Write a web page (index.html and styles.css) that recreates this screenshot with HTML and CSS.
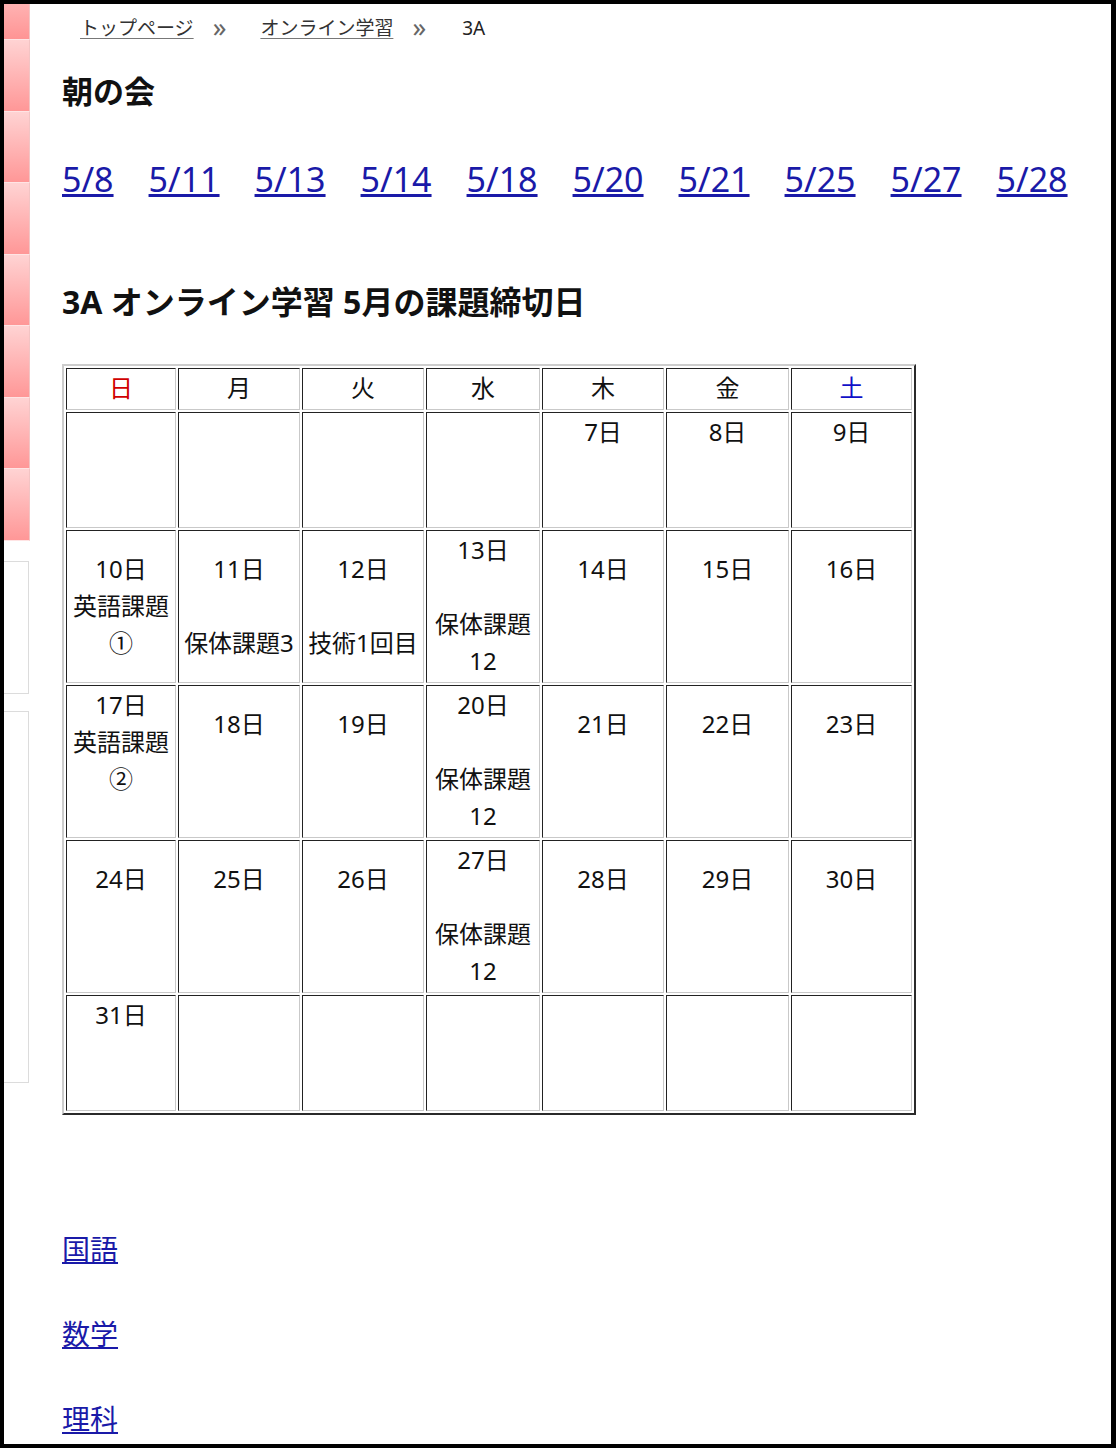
FILE: index.html
```html
<!DOCTYPE html>
<html lang="ja">
<head>
<meta charset="utf-8">
<title>3A オンライン学習</title>
<link rel="stylesheet" href="styles.css">
</head>
<body>
<div class="frame">
  <aside class="side">
    <div class="pink first"></div>
    <div class="pink"></div>
    <div class="pink"></div>
    <div class="pink"></div>
    <div class="pink"></div>
    <div class="pink"></div>
    <div class="pink"></div>
    <div class="pink"></div>
    <div class="gbox one"></div>
    <div class="gbox two"></div>
  </aside>
  <main class="main">
    <nav class="crumbs">
      <a href="#" class="crumb">トップページ</a>
      <span class="sep">»</span>
      <a href="#" class="crumb">オンライン学習</a>
      <span class="sep">»</span>
      <span class="here">3A</span>
    </nav>
    <h2 class="ttl t1">朝の会</h2>
    <div class="dates">
      <a href="#">5/8</a><a href="#">5/11</a><a href="#">5/13</a><a href="#">5/14</a><a href="#">5/18</a><a href="#">5/20</a><a href="#">5/21</a><a href="#">5/25</a><a href="#">5/27</a><a href="#">5/28</a>
    </div>
    <h2 class="ttl t2">3A オンライン学習 5月の課題締切日</h2>
    <table class="cal">
      <tr>
        <th class="w1 sun">日</th>
        <th class="w2">月</th>
        <th class="w3">火</th>
        <th class="w4">水</th>
        <th class="w5">木</th>
        <th class="w6">金</th>
        <th class="w7 sat">土</th>
      </tr>
      <tr>
        <td>&nbsp;</td>
        <td>&nbsp;</td>
        <td>&nbsp;</td>
        <td>&nbsp;</td>
        <td>7日<br><br>&nbsp;</td>
        <td>8日<br><br>&nbsp;</td>
        <td>9日<br><br>&nbsp;</td>
      </tr>
      <tr>
        <td>10日<br>英語課題<br>①</td>
        <td>11日<br><br>保体課題3</td>
        <td>12日<br><br>技術1回目</td>
        <td>13日<br><br>保体課題<br>12</td>
        <td>14日<br><br>&nbsp;</td>
        <td>15日<br><br>&nbsp;</td>
        <td>16日<br><br>&nbsp;</td>
      </tr>
      <tr>
        <td>17日<br>英語課題<br>②<br>&nbsp;</td>
        <td>18日<br><br>&nbsp;</td>
        <td>19日<br><br>&nbsp;</td>
        <td>20日<br><br>保体課題<br>12</td>
        <td>21日<br><br>&nbsp;</td>
        <td>22日<br><br>&nbsp;</td>
        <td>23日<br><br>&nbsp;</td>
      </tr>
      <tr>
        <td>24日<br><br>&nbsp;</td>
        <td>25日<br><br>&nbsp;</td>
        <td>26日<br><br>&nbsp;</td>
        <td>27日<br><br>保体課題<br>12</td>
        <td>28日<br><br>&nbsp;</td>
        <td>29日<br><br>&nbsp;</td>
        <td>30日<br><br>&nbsp;</td>
      </tr>
      <tr>
        <td>31日<br><br>&nbsp;</td>
        <td>&nbsp;</td>
        <td>&nbsp;</td>
        <td>&nbsp;</td>
        <td>&nbsp;</td>
        <td>&nbsp;</td>
        <td>&nbsp;</td>
      </tr>
    </table>
    <p class="subj first-subj"><a href="#">国語</a></p>
    <p class="subj"><a href="#">数学</a></p>
    <p class="subj"><a href="#">理科</a></p>
  </main>
</div>
</body>
</html>
```

FILE: styles.css
```css
html, body {
  margin: 0;
  padding: 0;
  background: #fff;
}

body {
  font-family: "Noto Sans", "Noto Sans CJK JP", sans-serif;
  color: #111;
}

.frame {
  height: 1448px;
  box-sizing: border-box;
  border: 4px solid #000;
  border-right-width: 5px;
  overflow: hidden;
  display: flex;
  background: #fff;
}

.side {
  width: 26px;
  flex: 0 0 26px;
  display: flex;
  flex-direction: column;
}

.pink {
  height: 71.5px;
  box-sizing: border-box;
  background: linear-gradient(#ffd3d3, #ff9797);
  border-bottom: 1px solid #ffe4e4;
  border-right: 1px solid #f3c4c4;
  flex: 0 0 auto;
}

.pink.first {
  height: 36px;
  background: linear-gradient(#ffb2b2, #ff9494);
}

.gbox {
  width: 25px;
  box-sizing: border-box;
  border: 1px solid #dcdcdc;
  border-left: none;
  flex: 0 0 auto;
}

.gbox.one {
  margin-top: 20px;
  height: 133px;
}

.gbox.two {
  margin-top: 17px;
  height: 372px;
}

.main {
  flex: 1;
  padding-left: 32px;
}

.crumbs {
  display: flex;
  align-items: center;
  margin: 9px 0 0 18px;
  font-size: 19px;
  line-height: 30px;
  color: #333;
}

.crumb {
  color: #333;
  text-decoration: underline;
  text-decoration-color: #777;
  text-underline-offset: 3px;
}

.sep {
  color: #666;
  font-size: 27px;
  line-height: 30px;
  margin: -3px 34px 0 19px;
}

.here {
  color: #222;
  margin-left: 2px;
}

.ttl {
  margin: 0;
  font-size: 32px;
  line-height: 42px;
  font-weight: 700;
  color: #111;
}

.t1 {
  margin-top: 27px;
  font-size: 31px;
}

.dates {
  display: flex;
  gap: 35px;
  margin-top: 45px;
  font-size: 34px;
  line-height: 44px;
}

.dates a,
.subj a {
  color: #1a1aa8;
  text-decoration: underline;
}

.t2 {
  margin-top: 80px;
}

.cal {
  margin-top: 41px;
  width: 854px;
  box-sizing: border-box;
  table-layout: fixed;
  border-collapse: separate;
  border-spacing: 2px;
  border: 2px solid;
  border-color: #cdcdcd #2a2a2a #2a2a2a #cdcdcd;
  font-size: 24px;
  line-height: 37px;
}

.cal th,
.cal td {
  box-sizing: border-box;
  padding: 0 1px 3px;
  border: 1px solid;
  border-color: #222 #c9c9c9 #c9c9c9 #222;
  text-align: center;
  vertical-align: middle;
  font-weight: 400;
  color: #111;
  white-space: nowrap;
}

.w1 { width: 110px; }
.w2 { width: 122px; }
.w3 { width: 122px; }
.w4 { width: 114px; }
.w5 { width: 122px; }
.w6 { width: 123px; }
.w7 { width: 121px; }

.cal th.sun { color: #d00000; }
.cal th.sat { color: #1010c8; }

.subj {
  margin: 43px 0 0;
  font-size: 28px;
  line-height: 42px;
}

.subj.first-subj {
  margin-top: 113px;
}
```
